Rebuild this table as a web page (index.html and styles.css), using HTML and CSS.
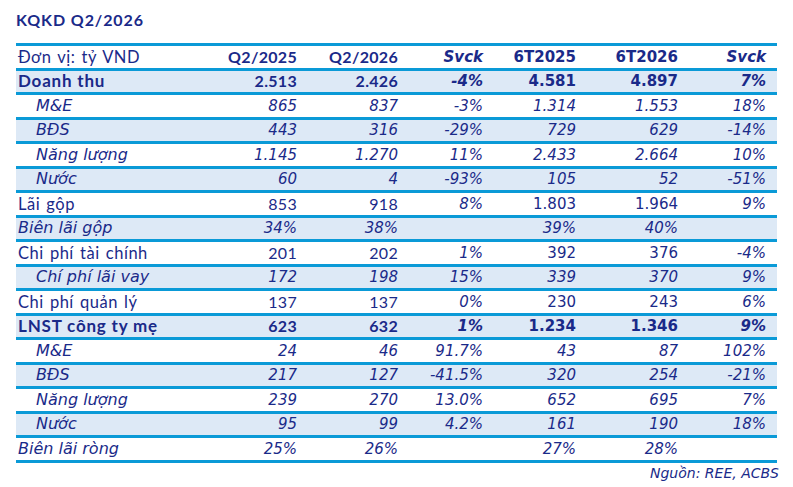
FILE: index.html
```html
<!DOCTYPE html>
<html lang="vi">
<head>
<meta charset="utf-8">
<title>KQKD Q2/2026</title>
<link rel="stylesheet" href="styles.css">
</head>
<body>
<div class="page">
  <h1 class="title">KQKD Q2/2026</h1>
  <div class="tbl">
    <div class="row head">
      <div class="lbl">Đơn vị: tỷ VND</div><div class="q">Q2/2025</div><div class="q">Q2/2026</div><div class="s">Svck</div><div class="h">6T2025</div><div class="h">6T2026</div><div class="s last">Svck</div>
    </div>
    <div class="row bold alt">
      <div class="lbl">Doanh thu</div><div class="q">2.513</div><div class="q">2.426</div><div class="s">-4%</div><div class="h">4.581</div><div class="h">4.897</div><div class="s last">7%</div>
    </div>
    <div class="row ital sub">
      <div class="lbl">M&amp;E</div><div class="q">865</div><div class="q">837</div><div class="s">-3%</div><div class="h">1.314</div><div class="h">1.553</div><div class="s last">18%</div>
    </div>
    <div class="row ital sub alt">
      <div class="lbl">BĐS</div><div class="q">443</div><div class="q">316</div><div class="s">-29%</div><div class="h">729</div><div class="h">629</div><div class="s last">-14%</div>
    </div>
    <div class="row ital sub">
      <div class="lbl">Năng lượng</div><div class="q">1.145</div><div class="q">1.270</div><div class="s">11%</div><div class="h">2.433</div><div class="h">2.664</div><div class="s last">10%</div>
    </div>
    <div class="row ital sub alt">
      <div class="lbl">Nước</div><div class="q">60</div><div class="q">4</div><div class="s">-93%</div><div class="h">105</div><div class="h">52</div><div class="s last">-51%</div>
    </div>
    <div class="row">
      <div class="lbl">Lãi gộp</div><div class="q">853</div><div class="q">918</div><div class="s">8%</div><div class="h">1.803</div><div class="h">1.964</div><div class="s last">9%</div>
    </div>
    <div class="row ital alt">
      <div class="lbl">Biên lãi gộp</div><div class="q">34%</div><div class="q">38%</div><div class="s"></div><div class="h">39%</div><div class="h">40%</div><div class="s last"></div>
    </div>
    <div class="row">
      <div class="lbl">Chi phí tài chính</div><div class="q">201</div><div class="q">202</div><div class="s">1%</div><div class="h">392</div><div class="h">376</div><div class="s last">-4%</div>
    </div>
    <div class="row ital sub alt">
      <div class="lbl">Chí phí lãi vay</div><div class="q">172</div><div class="q">198</div><div class="s">15%</div><div class="h">339</div><div class="h">370</div><div class="s last">9%</div>
    </div>
    <div class="row">
      <div class="lbl">Chi phí quản lý</div><div class="q">137</div><div class="q">137</div><div class="s">0%</div><div class="h">230</div><div class="h">243</div><div class="s last">6%</div>
    </div>
    <div class="row bold alt">
      <div class="lbl">LNST công ty mẹ</div><div class="q">623</div><div class="q">632</div><div class="s">1%</div><div class="h">1.234</div><div class="h">1.346</div><div class="s last">9%</div>
    </div>
    <div class="row ital sub">
      <div class="lbl">M&amp;E</div><div class="q">24</div><div class="q">46</div><div class="s">91.7%</div><div class="h">43</div><div class="h">87</div><div class="s last">102%</div>
    </div>
    <div class="row ital sub alt">
      <div class="lbl">BĐS</div><div class="q">217</div><div class="q">127</div><div class="s">-41.5%</div><div class="h">320</div><div class="h">254</div><div class="s last">-21%</div>
    </div>
    <div class="row ital sub">
      <div class="lbl">Năng lượng</div><div class="q">239</div><div class="q">270</div><div class="s">13.0%</div><div class="h">652</div><div class="h">695</div><div class="s last">7%</div>
    </div>
    <div class="row ital sub alt">
      <div class="lbl">Nước</div><div class="q">95</div><div class="q">99</div><div class="s">4.2%</div><div class="h">161</div><div class="h">190</div><div class="s last">18%</div>
    </div>
    <div class="row ital">
      <div class="lbl">Biên lãi ròng</div><div class="q">25%</div><div class="q">26%</div><div class="s"></div><div class="h">27%</div><div class="h">28%</div><div class="s last"></div>
    </div>
  </div>
  <p class="src">Nguồn: REE, ACBS</p>
</div>
</body>
</html>
```
FILE: styles.css
```css
html, body {
  margin: 0;
  padding: 0;
  background: #ffffff;
}
body {
  color: #1a2a89;
  font-family: "Lato", "Liberation Sans", sans-serif;
}
.page {
  padding: 10px 16px 0 16px;
  width: 761px;
}
.title {
  margin: 0 0 13px 0;
  font: 700 16px/20px "Lato", sans-serif;
  letter-spacing: 0.9px;
}
.tbl {
  border-top: 3px solid #0a9ad7;
}
.row {
  display: grid;
  grid-template-columns: 184px 97px 101px 85px 93px 102px 99px;
  align-items: center;
  height: 24.5px;
  box-sizing: border-box;
  border-bottom: 3px solid #0a9ad7;
  white-space: nowrap;
}
.row.alt {
  background: #dde9f6;
}
.lbl {
  padding-left: 2px;
  font: 400 16.5px/20px "Lato", sans-serif;
  letter-spacing: 0.5px;
  word-spacing: 1.5px;
}
.q {
  text-align: right;
  font: 400 16px/20px "Lato", sans-serif;
  letter-spacing: 0.3px;
}
.s, .h {
  text-align: right;
  font: 400 15px/20px "DejaVu Sans", sans-serif;
}
.s {
  font-style: italic;
}
.last {
  padding-right: 11px;
}
.head .q,
.bold .q {
  font-weight: 700;
}
.bold .lbl {
  font-weight: 700;
  font-size: 17px;
  letter-spacing: 0.8px;
  word-spacing: 0;
}
.head .s,
.head .h,
.bold .s,
.bold .h {
  font-weight: 700;
}
.ital .q,
.ital .h {
  font: italic 400 15px/20px "DejaVu Sans", sans-serif;
  letter-spacing: 0;
}
.ital .lbl {
  font: italic 400 16px/20px "DejaVu Sans", sans-serif;
  letter-spacing: 0;
  word-spacing: 0;
}
.sub .lbl {
  padding-left: 20px;
}
.src {
  margin: 2px -2px 0 0;
  text-align: right;
  font: italic 400 14px/16px "DejaVu Sans", sans-serif;
}
```
